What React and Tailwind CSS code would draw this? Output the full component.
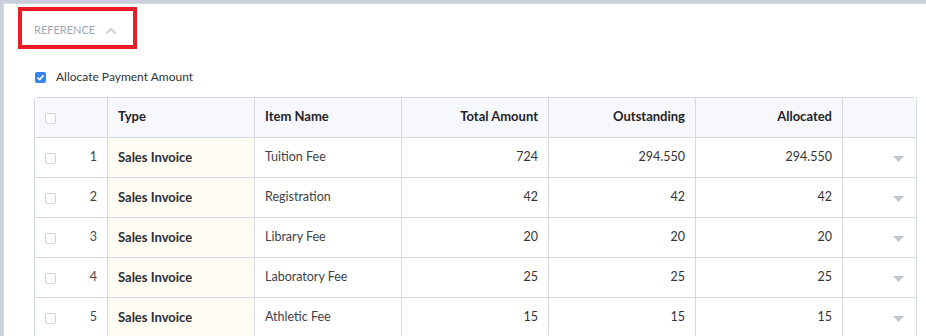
import React from "react";

const rows = [
  { no: 1, item: "Tuition Fee", total: "724", outstanding: "294.550", allocated: "294.550" },
  { no: 2, item: "Registration", total: "42", outstanding: "42", allocated: "42" },
  { no: 3, item: "Library Fee", total: "20", outstanding: "20", allocated: "20" },
  { no: 4, item: "Laboratory Fee", total: "25", outstanding: "25", allocated: "25" },
  { no: 5, item: "Athletic Fee", total: "15", outstanding: "15", allocated: "15" },
];

const cols = "grid grid-cols-[73px_147px_147px_147px_147px_147px_1fr]";

function Box() {
  return <span className="block h-[11px] w-[11px] rounded-[2px] border border-[#cfd4da] bg-white" />;
}

export default function App() {
  return (
    <div className="h-[336px] w-[926px] overflow-hidden bg-[#c9cfdc] pl-[3px] pt-[3px] font-['Lato',sans-serif] text-[12.5px] text-[#333]">
      <div className="h-full border-l border-t border-[#d6dbe3] bg-white pl-[14px] pr-[6px] pt-[3px]">
        <div className="flex h-[42px] w-[119px] items-center gap-[10px] border-4 border-[#ec1c24] pl-[12px] pt-[5px]">
          <span className="text-[11px] text-[#a0a7b3]">REFERENCE</span>
          <svg width="12" height="8" viewBox="0 0 12 8">
            <path d="M1.5 6.5 L6 2 L10.5 6.5" fill="none" stroke="#cdd2d9" strokeWidth="2.2" />
          </svg>
        </div>
        <div className="ml-[17px] mt-[19px] flex items-center gap-[10px]">
          <span className="flex h-[11px] w-[11px] items-center justify-center rounded-[2px] bg-[#3b82f6]">
            <svg width="9" height="9" viewBox="0 0 9 9">
              <path d="M1.5 4.6 L3.6 6.6 L7.6 2.4" fill="none" stroke="white" strokeWidth="1.6" />
            </svg>
          </span>
          <span className="text-[12px] text-[#333]">Allocate Payment Amount</span>
        </div>
        <div className="ml-[16px] mt-[11px] w-[883px] rounded-t-[3px] border border-[#d5dae1]">
          <div className={`${cols} h-[39px] bg-[#f6f8fb] text-[13px] font-bold text-[#1f2328]`}>
            <div className="flex items-center border-r border-[#d5dae1] pl-[10px] pt-[2px]"><Box /></div>
            <div className="flex items-center border-r border-[#d5dae1] pl-[10px] pb-[2px]">Type</div>
            <div className="flex items-center border-r border-[#d5dae1] pl-[10px] pb-[2px]">Item Name</div>
            <div className="flex items-center justify-end border-r border-[#d5dae1] pr-[10px] pb-[2px]">Total Amount</div>
            <div className="flex items-center justify-end border-r border-[#d5dae1] pr-[10px] pb-[2px]">Outstanding</div>
            <div className="flex items-center justify-end border-r border-[#d5dae1] pr-[10px] pb-[2px]">Allocated</div>
            <div />
          </div>
          {rows.map((r) => (
            <div key={r.no} className={`${cols} h-[40px] border-t border-[#d5dae1]`}>
              <div className="flex items-center justify-between border-r border-[#d5dae1] pl-[10px] pr-[10px] pt-[2px]">
                <Box />
                <span className="-mt-[2px] text-[#444]">{r.no}</span>
              </div>
              <div className="flex items-center border-r border-[#d5dae1] bg-[#fffcf4] pl-[10px] text-[13px] font-bold text-[#2b2f33]">Sales Invoice</div>
              <div className="flex items-center border-r border-[#d5dae1] pl-[10px] text-[#3f3f46]">{r.item}</div>
              <div className="flex items-center justify-end border-r border-[#d5dae1] pr-[10px]">{r.total}</div>
              <div className="flex items-center justify-end border-r border-[#d5dae1] pr-[10px]">{r.outstanding}</div>
              <div className="flex items-center justify-end border-r border-[#d5dae1] pr-[10px]">{r.allocated}</div>
              <div className="flex items-center justify-end pr-[12px] pt-[2px]">
                <svg width="11" height="6" viewBox="0 0 11 6">
                  <path d="M0 0 H11 L5.5 6 Z" fill="#c4c7cc" />
                </svg>
              </div>
            </div>
          ))}
        </div>
      </div>
    </div>
  );
}
